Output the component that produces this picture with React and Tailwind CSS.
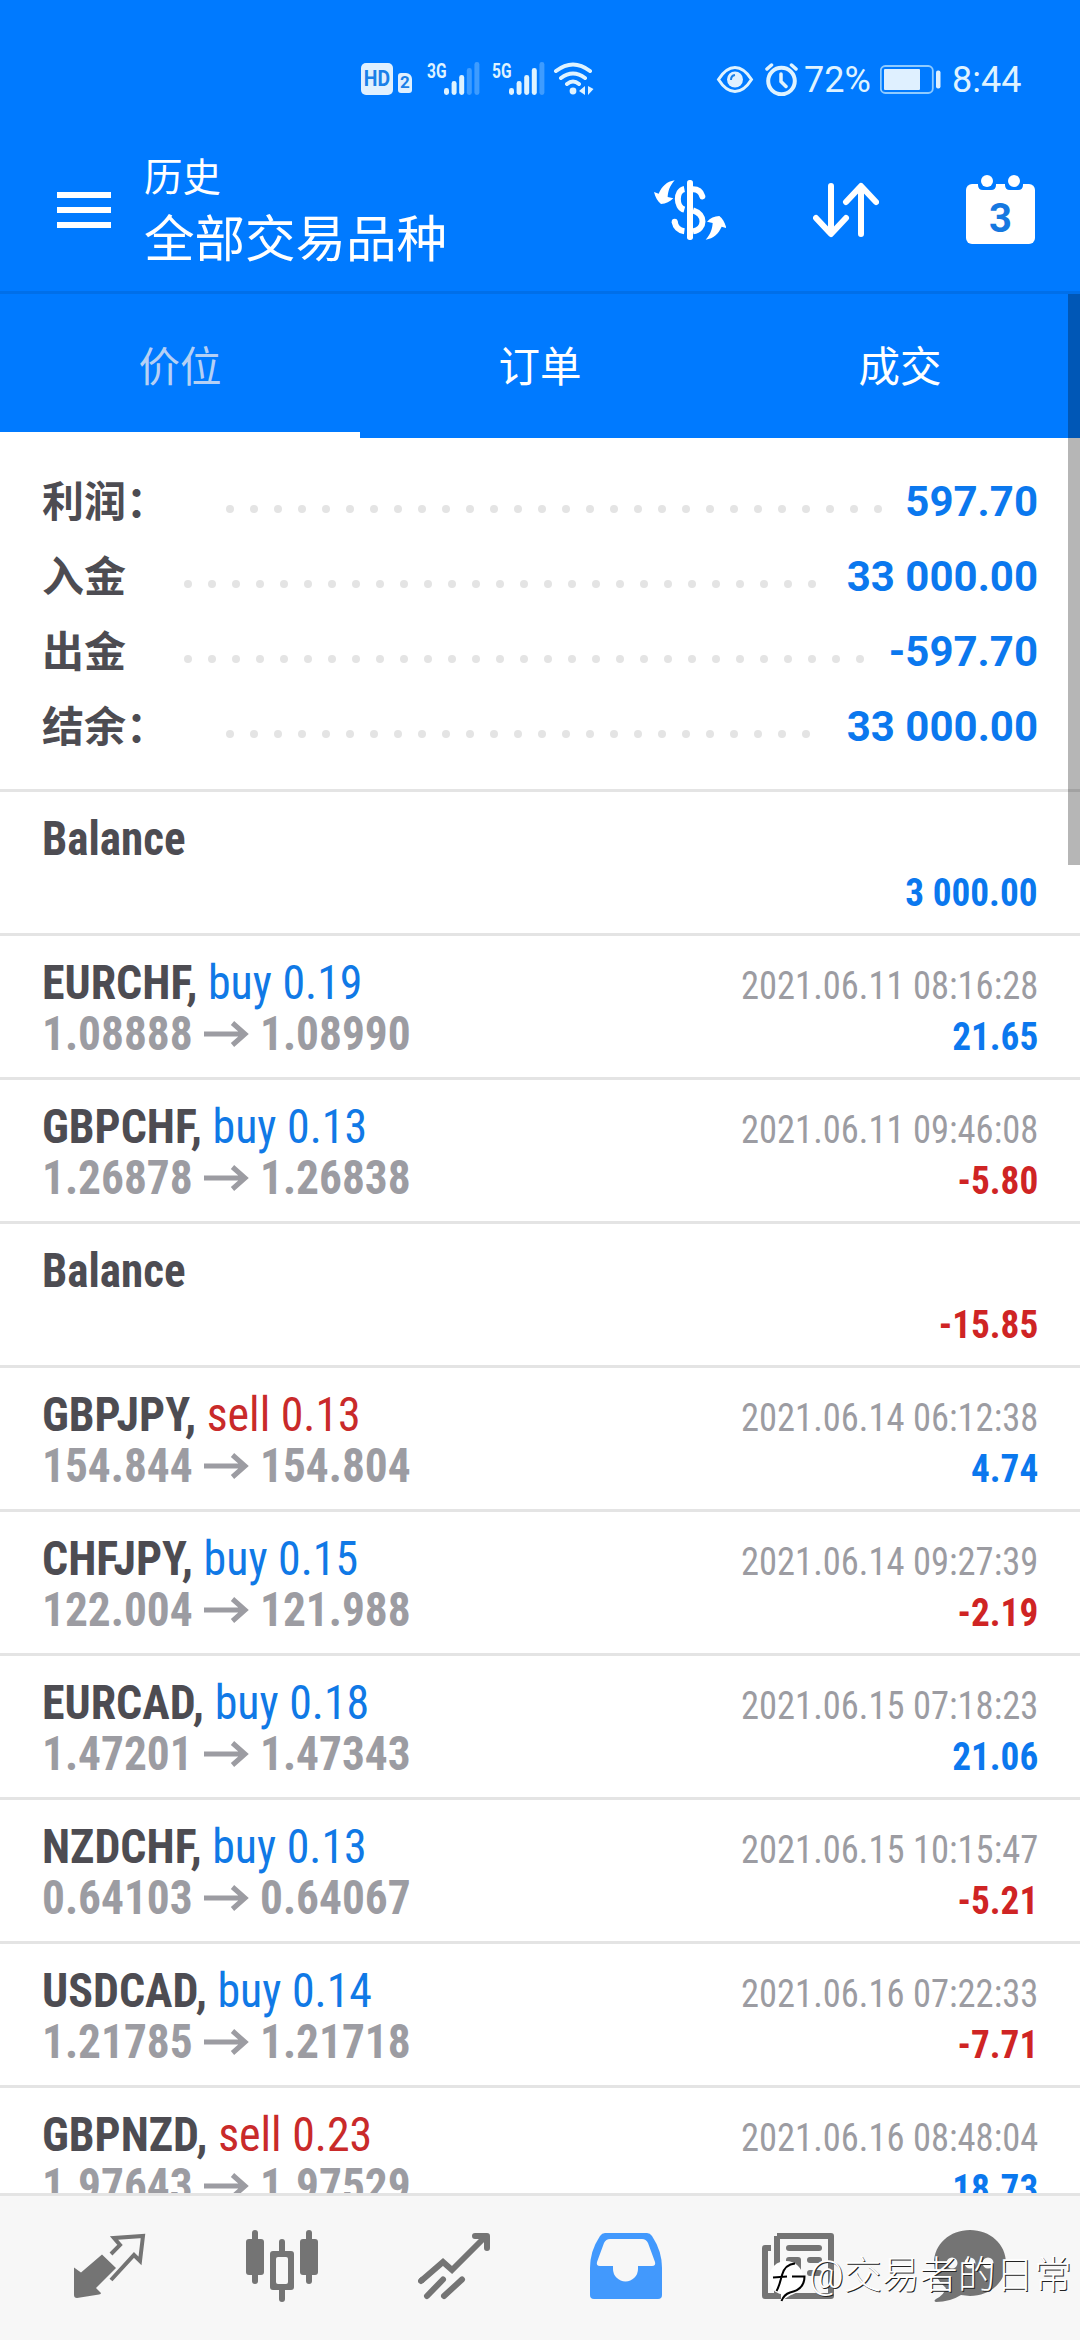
import React from 'react'
import clsx from 'clsx'

const summary = [
  { label: '利润：', dots: 28, value: '597.70' },
  { label: '入金', dots: 27, value: '33 000.00' },
  { label: '出金', dots: 29, value: '-597.70' },
  { label: '结余：', dots: 25, value: '33 000.00' },
]

const deals = [
  { balance: true, profit: '3 000.00' },
  { symbol: 'EURCHF', side: 'buy', volume: '0.19', open: '1.08888', close: '1.08990', time: '2021.06.11 08:16:28', profit: '21.65' },
  { symbol: 'GBPCHF', side: 'buy', volume: '0.13', open: '1.26878', close: '1.26838', time: '2021.06.11 09:46:08', profit: '-5.80' },
  { balance: true, profit: '-15.85' },
  { symbol: 'GBPJPY', side: 'sell', volume: '0.13', open: '154.844', close: '154.804', time: '2021.06.14 06:12:38', profit: '4.74' },
  { symbol: 'CHFJPY', side: 'buy', volume: '0.15', open: '122.004', close: '121.988', time: '2021.06.14 09:27:39', profit: '-2.19' },
  { symbol: 'EURCAD', side: 'buy', volume: '0.18', open: '1.47201', close: '1.47343', time: '2021.06.15 07:18:23', profit: '21.06' },
  { symbol: 'NZDCHF', side: 'buy', volume: '0.13', open: '0.64103', close: '0.64067', time: '2021.06.15 10:15:47', profit: '-5.21' },
  { symbol: 'USDCAD', side: 'buy', volume: '0.14', open: '1.21785', close: '1.21718', time: '2021.06.16 07:22:33', profit: '-7.71' },
  { symbol: 'GBPNZD', side: 'sell', volume: '0.23', open: '1.97643', close: '1.97529', time: '2021.06.16 08:48:04', profit: '18.73' },
]

function Signal({ label, level }) {
  const tops = [88, 81, 75, 68, 62]
  return (
    <div className="flex h-[34px] items-start">
      <span className="w-[17px] origin-left scale-x-[0.74] text-[21px] leading-[18px] font-bold">{label}</span>
      <svg width="36" height="34" viewBox="0 62 36 34" fill="#dff3ff">
        {tops.map((y, i) => (
          <rect key={y} x={i * 7.6} y={y} width="5" height={95 - y} rx="2.4" opacity={i < level ? 1 : 0.28} />
        ))}
      </svg>
    </div>
  )
}

function StatusBar() {
  return (
    <div className="flex h-[129px] items-center pt-[29px] pl-[361px] text-[#dff3ff]">
      <div className="flex h-[32px] w-[32px] items-center justify-center rounded-[5px] bg-[#dff0ff] text-[#1a80e8]">
        <span className="scale-x-[0.88] text-[22px] leading-none font-bold">HD</span>
      </div>
      <div className="mt-[7px] ml-[5px] flex h-[20px] w-[14px] items-center justify-center rounded-[3px] rounded-tr-[6px] bg-[#dff0ff] text-[17px] leading-none font-bold text-[#1a80e8]">
        2
      </div>
      <div className="ml-[15px]">
        <Signal label="3G" level={3} />
      </div>
      <div className="ml-[12px]">
        <Signal label="5G" level={4} />
      </div>
      <svg className="ml-[8px]" width="41" height="34" viewBox="553 62 41 34" fill="none" stroke="#dff3ff" strokeWidth="4" strokeLinecap="round">
        <path d="M556 71q17-13 34 0M561 78q12-9 24 0M567 84q6-5 12 0" />
        <circle cx="573" cy="91" r="3.4" fill="#dff3ff" stroke="none" />
        <path d="M585 86v9l-6-4zM588 86v9l5.500-6z" fill="#dff3ff" stroke="none" />
      </svg>
      <svg className="ml-[122px]" width="38" height="34" viewBox="716 62 38 34" fill="none" stroke="#dff3ff" strokeWidth="3">
        <path d="M718.500 79.500q7.500-12 16.500-12t16.500 12q-7.500 12-16.500 12t-16.500-12z" />
        <circle cx="735" cy="79.500" r="8" fill="#dff0ff" stroke="none" />
        <path d="M731 80q0-4.500 4-5" stroke="#1a80e8" strokeWidth="2" />
      </svg>
      <svg className="ml-[11px]" width="34" height="34" viewBox="765 62 34 34" fill="none" stroke="#dff3ff" strokeWidth="4" strokeLinecap="round">
        <circle cx="781.500" cy="81" r="13.300" />
        <path d="M767 69l4.500-4M796 69l-4.500-4M781 74v7.500l5 5" strokeWidth="3.500" />
      </svg>
      <span className="ml-[5px] w-[76px] pt-[2px] text-[36px] leading-none">72%</span>
      <svg width="62" height="34" viewBox="880 62 62 34" fill="#dff0ff">
        <rect x="880.800" y="66" width="52" height="27" rx="4.500" fill="none" stroke="#8fcbff" strokeWidth="1.800" />
        <rect x="884" y="69" width="36" height="21" rx="1" />
        <rect x="936" y="70.500" width="4.500" height="18" rx="2" />
      </svg>
      <span className="ml-[10px] pt-[2px] text-[36px] leading-none">8:44</span>
    </div>
  )
}

function Header() {
  return (
    <header className="flex h-[165px] items-center border-b-[3px] border-[#006fe9] pr-[45px] pl-[57px] text-white">
      <div className="flex w-[54px] flex-col gap-[9px]">
        <div className="h-[6px] bg-white"></div>
        <div className="h-[6px] bg-white"></div>
        <div className="h-[6px] bg-white"></div>
      </div>
      <div className="ml-[33px] flex-1 pt-[6px]">
        <div className="text-[38.500px] leading-[50px]">历史</div>
        <div className="mt-[4px] text-[50.500px] leading-[66px]">全部交易品种</div>
      </div>
      <svg width="72" height="60" viewBox="27 30 216 180" fill="white">
        <path d="M89 31c-16 18-20 34-21 50l17 4c-10 10-22 17-37 17-10-8-17-20-21-36l14 5c10-22 24-36 48-40z" />
        <path d="M182 209c16-18 20-34 21-50l-17-4c10-10 22-17 37-17 10 8 17 20 21 36l-14-4c-10 22-24 35-48 39z" />
        <rect x="126" y="30" width="18" height="180" rx="8" />
        <g fill="none" stroke="white" strokeWidth="18">
          <path d="M118 57c-26 5-26 55 0 62M118 184c-16-2-27-13-29-29" />
          <path d="M144 58c14 0 24 7 28 21" strokeLinecap="round" />
          <path d="M144 121c38 12 38 56 0 63" />
          <path d="M89 156v-1" strokeLinecap="round" />
        </g>
      </svg>
      <svg className="ml-[87px]" width="66" height="56" viewBox="813 182 66 56" fill="none" stroke="white" strokeWidth="6" strokeLinecap="round" strokeLinejoin="round">
        <path d="M831 186v47M816 218l15 16 15-16M861 234v-47M846 202l15-16 15 16" />
      </svg>
      <svg className="ml-[87px]" width="69" height="70" viewBox="966 174 69 70" fill="white">
        <rect x="966" y="183" width="69" height="60" rx="6" />
        <path d="M978 180h18v4q0 5-5 5h-8q-5 0-5-5zM1005 180h18v4q0 5-5 5h-8q-5 0-5-5z" fill="#007aff" />
        <circle cx="987" cy="180" r="6" />
        <circle cx="1014" cy="180" r="6" />
        <text x="1000.500" y="230.500" textAnchor="middle" fontSize="40" fontWeight="700" fill="#1678e0">3</text>
      </svg>
    </header>
  )
}

function Tabs() {
  return (
    <div className="grid h-[144px] grid-cols-3 text-center text-[41.500px] leading-[148px] text-white">
      <div className="h-[144px] border-b-[6px] border-white text-[#b5d0f5]">价位</div>
      <div>订单</div>
      <div>成交</div>
    </div>
  )
}

function Summary() {
  return (
    <div className="h-[351px] px-[42px] pt-[26px] text-[42px] font-bold">
      {summary.map((row) => (
        <div key={row.label} className="flex h-[75px] items-center">
          <span className="pt-px text-[#4d4c52]">{row.label}</span>
          <div className="mt-[15px] ml-[58px] flex flex-1 gap-4">
            {Array.from({ length: row.dots }, (_, i) => (
              <div key={i} className="h-2 w-2 shrink-0 rounded-full bg-[#e4e4e4]"></div>
            ))}
          </div>
          <span className="text-[#0b78ee]">{row.value}</span>
        </div>
      ))}
    </div>
  )
}

function Arrow() {
  return (
    <svg className="shrink-0" width="46" height="26" viewBox="0 0 46 26" fill="none" stroke="#9c9ca2" strokeWidth="5">
      <path d="M0 13h41M28.500 2l12.500 11-12.500 11" />
    </svg>
  )
}

function Deal({ deal }) {
  const profitColor = deal.profit.startsWith('-') ? 'text-[#cf2424]' : 'text-[#0b78ee]'
  return (
    <div className="flex h-[144px] justify-between border-t-[3px] border-[#e4e4e4] px-[42px] whitespace-nowrap font-stretch-condensed">
      <div className="w-[400px] pt-[21px] text-[48px] leading-[51px] font-bold text-[#4d4c52]">
        {deal.balance ? (
          <div className="origin-left scale-x-[0.938]">Balance</div>
        ) : (
          <>
            <div className="origin-left scale-x-[0.956]">
              {deal.symbol},{' '}
              <span className={clsx('font-normal', deal.side === 'buy' ? 'text-[#1079e6]' : 'text-[#c92a2a]')}>
                {deal.side} {deal.volume}
              </span>
            </div>
            <div className="flex items-center text-[#9c9ca2]">
              <span className="w-[162px] origin-left scale-x-[0.945]">{deal.open}</span>
              <Arrow />
              <span className="ml-[10px] origin-left scale-x-[0.945]">{deal.close}</span>
            </div>
          </>
        )}
      </div>
      <div className="pt-[24px] text-right text-[39px] leading-[51px]">
        <div className="h-[51px] origin-right scale-x-[0.937] pt-px text-[#9c9ca2]">{deal.time}</div>
        <div className={clsx('origin-right scale-x-[0.955] pt-px font-bold', profitColor)}>{deal.profit}</div>
      </div>
    </div>
  )
}

function NavBar() {
  return (
    <nav className="relative z-10 grid h-[147px] grid-cols-6 justify-items-center border-t-[3px] border-[#e4e4e4] bg-[#f7f7f7] px-6 pt-[34px]">
      <svg width="72" height="72" viewBox="0 0 72 72" fill="#747474">
        <path d="M28 24.500l14 13.500-20 20 5 5q0 1-2 1.500l-22 3.500q-3 0-3-3V37.500l7 5z" />
        <path d="M37 24l9-9-6-7 29-2-3 25-6-6-23 25" fill="none" stroke="#747474" strokeWidth="4" />
      </svg>
      <svg width="72" height="74" viewBox="0 0 72 74" fill="#747474">
        <rect x="0" y="9" width="18" height="36" rx="3" />
        <rect x="6" y="0" width="6" height="54" rx="3" />
        <rect x="54" y="9" width="18" height="36" rx="3" />
        <rect x="60" y="0" width="6" height="54" rx="3" />
        <rect x="33" y="9" width="6" height="63" rx="3" />
        <rect x="24" y="21" width="24" height="39" rx="3" />
        <rect x="30" y="27" width="12" height="27" rx="2" fill="#f7f7f7" />
      </svg>
      <svg width="72" height="72" viewBox="0 0 72 72" fill="none" stroke="#747474" strokeWidth="6">
        <path d="M3 51l22-19 9 8 33-33" strokeLinejoin="miter" />
        <path d="M57 6h12v12M3 51l1-1M9 66l16-16.500M26 66l18-16.500" strokeLinecap="round" strokeLinejoin="round" />
      </svg>
      <svg width="72" height="72" viewBox="0 0 72 72">
        <path d="M15 3h42q3 0 5 3 10 15 10 32v27q0 4-4 4H4q-4 0-4-4V38Q0 21 10 6q2-3 5-3z" fill="#4299fd" />
        <path d="M20 9h32q4 0 6 4l7 19q1 4-3 4H48v3a12 12 0 0 1-25 0v-3H10q-4 0-3-4l7-19q2-4 6-4z" fill="#f7f7f7" />
      </svg>
      <svg width="72" height="72" viewBox="0 0 72 72" fill="#747474">
        <path d="M3 15h6v6H6v42h6v6H3q-3 0-3-3V18q0-3 3-3z" />
        <path d="M15 6h54v60H3" fill="none" stroke="#747474" strokeWidth="6" strokeLinejoin="round" />
        <path d="M12 6h6v60h-6z" />
        <rect x="24" y="15" width="36" height="6" rx="3" />
        <rect x="24" y="27" width="15" height="19" rx="3" />
        <rect x="45" y="27" width="15" height="6" rx="3" />
        <rect x="45" y="40" width="15" height="6" rx="3" />
      </svg>
      <svg width="72" height="72" viewBox="0 0 72 72">
        <path d="M36 0c20 0 36 14 36 33S56 66 36 66l-9-1q-11 7-25 7-3-1 0-3 8-4 10-11Q0 49 0 33C0 14 16 0 36 0z" fill="#747474" />
        <circle cx="18" cy="33" r="5.500" fill="#f7f7f7" />
        <circle cx="36" cy="33" r="5.500" fill="#f7f7f7" />
        <circle cx="54" cy="33" r="5.500" fill="#f7f7f7" />
      </svg>
      <div className="absolute top-[54px] left-[768px] flex items-start text-white">
        <svg width="41" height="54" viewBox="0 0 41 54" fill="none" stroke="black" strokeWidth="2">
          <path d="M18 11a17 16.500 0 0 1 17 16c0 12-6 16-12 18l-10 6v-7C6 43 1 36 1 27a17 16.500 0 0 1 17-16z" fill="white" stroke="none" />
          <path d="M8.500 41c3-5 4-11 5.500-16 2-7 6-11 13-11.500M5 27.500l14-1" />
          <path d="M24 26.500h12.500c0 9-5 14-14.500 16q-6 2-8.500 8.500" />
        </svg>
        <span className="text-[38px] leading-[50px] font-light [text-shadow:1px_1px_0.5px_#222]">@交易者的日常</span>
      </div>
    </nav>
  )
}

export default function App() {
  return (
    <div className="relative flex h-[2340px] w-[1080px] flex-col overflow-hidden bg-white font-['Roboto','Noto_Sans_CJK_SC',sans-serif]">
      <div className="shrink-0 bg-[#007aff]">
        <StatusBar />
        <Header />
        <Tabs />
      </div>
      <div className="min-h-0 flex-1 overflow-hidden">
        <Summary />
        {deals.map((deal, i) => (
          <Deal key={i} deal={deal} />
        ))}
      </div>
      <NavBar />
      <div className="absolute top-[294px] right-0 h-[571px] w-[12px] bg-black/[0.285]"></div>
    </div>
  )
}
